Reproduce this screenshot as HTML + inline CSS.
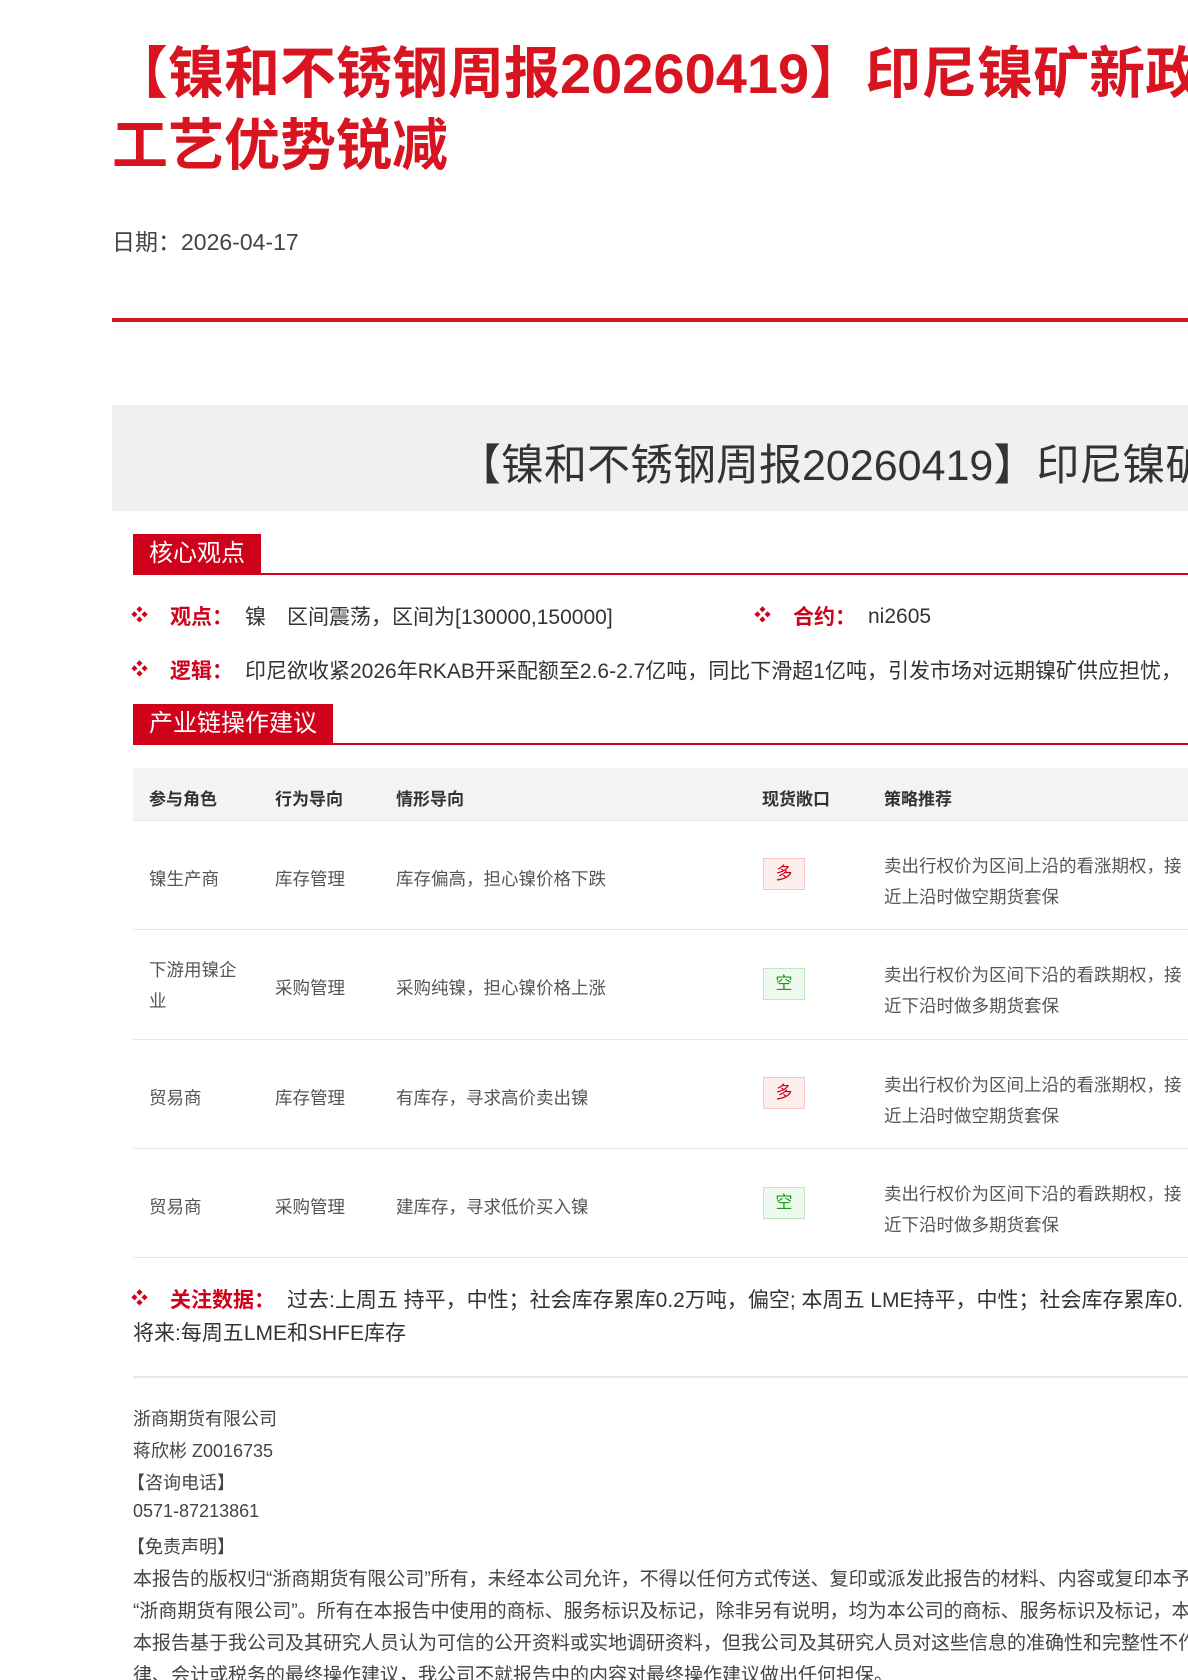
<!DOCTYPE html>
<html><head><meta charset="utf-8"><style>
*{margin:0;padding:0;box-sizing:border-box}
html,body{width:1188px;height:1680px;overflow:hidden;background:#fff;font-family:"Liberation Sans","Noto Sans CJK SC",sans-serif;color:#333}
.wrap{position:relative;width:1188px;height:1680px;overflow:hidden}
.a{position:absolute;white-space:nowrap}
.title{left:112px;top:38px;font-size:56px;font-weight:bold;color:#d7141f;line-height:72px}
.date{left:112px;top:223px;font-size:23px;color:#444}
.rl{left:112px;top:318px;width:1076px;height:4px;background:#d7141f}
.gbox{left:112px;top:405px;width:1076px;height:106px;background:#f0f0f0}
.gt{left:458px;top:431px;font-size:43px;color:#333}
.tab{background:#d0021b;color:#fff;font-size:24px;height:40px;line-height:40px;padding:0 16px}
.ln{height:2px;background:#d0021b;left:133px;width:1055px}
.b{color:#d0021b;font-size:17px;font-weight:bold}
.lbl{color:#d0021b;font-size:21px;font-weight:bold}
.tx{font-size:21px;color:#333}
.th{left:133px;top:768px;width:1055px;height:53px;background:#f2f3f5;border-bottom:1px solid #e4e7ec}
.h{font-size:17px;font-weight:bold;color:#333}
.c{font-size:17.5px;color:#555}
.row{left:133px;width:1055px;height:1px;background:#e4e7ec}
.tag{width:42px;height:32px;line-height:30px;text-align:center;font-size:17px}
.r{background:#fdeeee;border:1px solid #f7c5c5;color:#d0021b}
.g{background:#eefaee;border:1px solid #bfe6bf;color:#1a9a1a}
.f{font-size:18px;color:#444}
.d{font-size:19px;color:#444}
</style></head><body><div class="wrap">
<div class="a title">【镍和不锈钢周报20260419】印尼镍矿新政<br>工艺优势锐减</div>
<div class="a date">日期：2026-04-17</div>
<div class="a rl"></div>
<div class="a gbox"></div>
<div class="a gt">【镍和不锈钢周报20260419】印尼镍矿新政</div>

<div class="a tab" style="left:133px;top:534px">核心观点</div>
<div class="a ln" style="top:573px"></div>
<div class="a b" style="left:131px;top:601px">❖</div>
<div class="a lbl" style="left:170px;top:601px">观点：</div>
<div class="a tx" style="left:245px;top:601px">镍　区间震荡，区间为[130000,150000]</div>
<div class="a b" style="left:754px;top:601px">❖</div>
<div class="a lbl" style="left:793px;top:601px">合约：</div>
<div class="a tx" style="left:868px;top:605px">ni2605</div>
<div class="a b" style="left:131px;top:655px">❖</div>
<div class="a lbl" style="left:170px;top:655px">逻辑：</div>
<div class="a tx" style="left:245px;top:655px">印尼欲收紧2026年RKAB开采配额至2.6-2.7亿吨，同比下滑超1亿吨，引发市场对远期镍矿供应担忧，</div>

<div class="a tab" style="left:133px;top:704px">产业链操作建议</div>
<div class="a ln" style="top:743px"></div>

<div class="a th"></div>
<div class="a h" style="left:149px;top:785px">参与角色</div>
<div class="a h" style="left:275px;top:785px">行为导向</div>
<div class="a h" style="left:396px;top:785px">情形导向</div>
<div class="a h" style="left:762px;top:785px">现货敞口</div>
<div class="a h" style="left:884px;top:785px">策略推荐</div>

<div class="a c" style="left:149px;top:866px">镍生产商</div>
<div class="a c" style="left:275px;top:866px">库存管理</div>
<div class="a c" style="left:396px;top:866px">库存偏高，担心镍价格下跌</div>
<div class="a tag r" style="left:763px;top:858px">多</div>
<div class="a c" style="left:884px;top:851px;line-height:31px">卖出行权价为区间上沿的看涨期权，接<br>近上沿时做空期货套保</div>
<div class="a row" style="top:929px"></div>

<div class="a c" style="left:149px;top:955px;line-height:31px">下游用镍企<br>业</div>
<div class="a c" style="left:275px;top:975px">采购管理</div>
<div class="a c" style="left:396px;top:975px">采购纯镍，担心镍价格上涨</div>
<div class="a tag g" style="left:763px;top:968px">空</div>
<div class="a c" style="left:884px;top:960px;line-height:31px">卖出行权价为区间下沿的看跌期权，接<br>近下沿时做多期货套保</div>
<div class="a row" style="top:1039px"></div>

<div class="a c" style="left:149px;top:1085px">贸易商</div>
<div class="a c" style="left:275px;top:1085px">库存管理</div>
<div class="a c" style="left:396px;top:1085px">有库存，寻求高价卖出镍</div>
<div class="a tag r" style="left:763px;top:1077px">多</div>
<div class="a c" style="left:884px;top:1070px;line-height:31px">卖出行权价为区间上沿的看涨期权，接<br>近上沿时做空期货套保</div>
<div class="a row" style="top:1148px"></div>

<div class="a c" style="left:149px;top:1194px">贸易商</div>
<div class="a c" style="left:275px;top:1194px">采购管理</div>
<div class="a c" style="left:396px;top:1194px">建库存，寻求低价买入镍</div>
<div class="a tag g" style="left:763px;top:1187px">空</div>
<div class="a c" style="left:884px;top:1179px;line-height:31px">卖出行权价为区间下沿的看跌期权，接<br>近下沿时做多期货套保</div>
<div class="a row" style="top:1257px"></div>

<div class="a b" style="left:131px;top:1284px">❖</div>
<div class="a lbl" style="left:170px;top:1284px">关注数据：</div>
<div class="a tx" style="left:287px;top:1284px">过去:上周五 持平，中性；社会库存累库0.2万吨，偏空; 本周五 LME持平，中性；社会库存累库0.</div>
<div class="a tx" style="left:133px;top:1317px">将来:每周五LME和SHFE库存</div>
<div class="a row" style="top:1376px;height:2px"></div>

<div class="a f" style="left:133px;top:1405px">浙商期货有限公司</div>
<div class="a f" style="left:133px;top:1437px">蒋欣彬 Z0016735</div>
<div class="a f" style="left:127px;top:1469px">【咨询电话】</div>
<div class="a f" style="left:133px;top:1501px">0571-87213861</div>
<div class="a f" style="left:127px;top:1533px">【免责声明】</div>
<div class="a d" style="left:133px;top:1564px">本报告的版权归“浙商期货有限公司”所有，未经本公司允许，不得以任何方式传送、复印或派发此报告的材料、内容或复印本予</div>
<div class="a d" style="left:133px;top:1596px">“浙商期货有限公司”。所有在本报告中使用的商标、服务标识及标记，除非另有说明，均为本公司的商标、服务标识及标记，本</div>
<div class="a d" style="left:133px;top:1628px">本报告基于我公司及其研究人员认为可信的公开资料或实地调研资料，但我公司及其研究人员对这些信息的准确性和完整性不作保</div>
<div class="a d" style="left:133px;top:1660px">律、会计或税务的最终操作建议，我公司不就报告中的内容对最终操作建议做出任何担保。</div>
</div></body></html>
